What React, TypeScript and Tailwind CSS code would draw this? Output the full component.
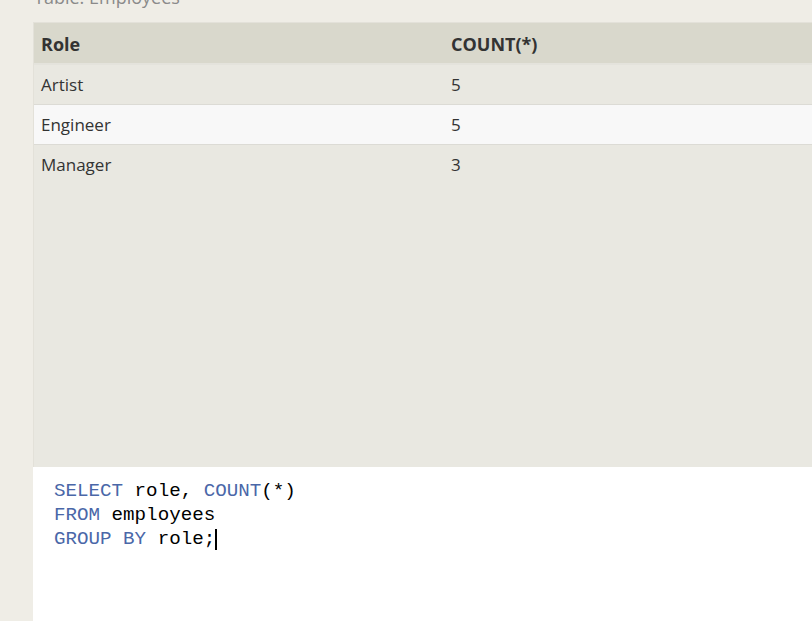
import React from "react";

export default function App() {
  const rows = [
    { role: "Artist", count: 5, bg: "bg-[#e9e8e1]", border: "border-b border-[#dcdbd5]" },
    { role: "Engineer", count: 5, bg: "bg-[#f8f8f8]", border: "border-b border-[#dcdbd5]" },
    { role: "Manager", count: 3, bg: "bg-[#e9e8e1]", border: "border-b border-transparent" },
  ];
  return (
    <div
      className="w-[812px] h-[621px] bg-[#efede6] flex overflow-hidden"
      style={{ fontFamily: '"Open Sans", "Noto Sans", sans-serif' }}
    >
      <div className="w-[33px] shrink-0" />
      <div className="flex-1 flex flex-col min-w-0">
        <div className="h-[22px] shrink-0 relative overflow-hidden">
          <div className="absolute left-[1px] bottom-[13px] text-[18px] leading-[24px] text-[#8a8a8a] whitespace-nowrap">
            Table: Employees
          </div>
        </div>
        <div className="flex-1 flex flex-col border-l border-t border-[#e3e1d9] bg-[#e9e8e1] min-h-0">
          <div className="flex h-[42px] pt-[2px] items-center bg-[#d9d8cc] border-b-2 border-[#e4e3dc] text-[18px] font-bold text-[#333333] shrink-0">
            <div className="w-[409px] pl-[7px]">Role</div>
            <div className="flex-1 pl-[8px]">COUNT(*)</div>
          </div>
          {rows.map((r) => (
            <div
              key={r.role}
              className={`flex h-[40px] pt-[1px] items-center ${r.bg} ${r.border} text-[17px] text-[#333333] shrink-0`}
            >
              <div className="w-[409px] pl-[7px]">{r.role}</div>
              <div className="flex-1 pl-[8px]">{r.count}</div>
            </div>
          ))}
          <div className="flex-1" />
        </div>
        <div
          className="h-[154px] shrink-0 bg-white pl-[21px] pt-[12px] text-[19.2px] leading-[24px] text-black"
          style={{ fontFamily: '"Liberation Mono", "DejaVu Sans Mono", monospace' }}
        >
          <div className="whitespace-pre">
            <span className="text-[#4a67a8]">SELECT</span> role, <span className="text-[#4a67a8]">COUNT</span>(*)
          </div>
          <div className="whitespace-pre">
            <span className="text-[#4a67a8]">FROM</span> employees
          </div>
          <div className="whitespace-pre flex items-center">
            <span className="text-[#4a67a8]">GROUP BY</span>&nbsp;role;
            <span className="inline-block w-[2px] h-[21px] bg-black" />
          </div>
        </div>
      </div>
    </div>
  );
}
